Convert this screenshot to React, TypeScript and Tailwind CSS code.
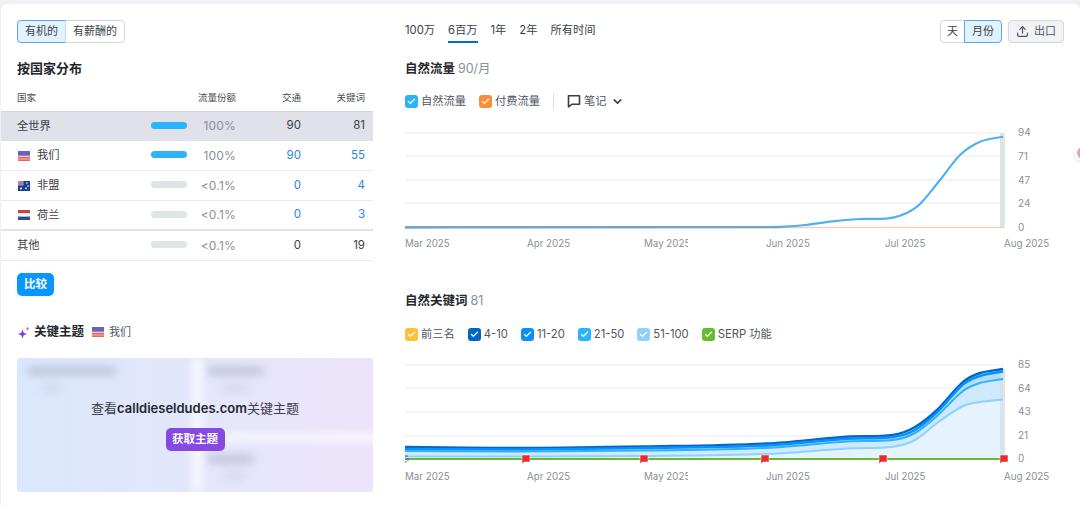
import { Check, ChevronDown, Upload } from 'lucide-react';

const rows = [
  { name: '全世界', flag: '', share: '100%', full: true, traffic: '90', keywords: '81', link: false },
  { name: '我们', flag: 'us', share: '100%', full: true, traffic: '90', keywords: '55', link: true },
  { name: '非盟', flag: 'au', share: '<0.1%', full: false, traffic: '0', keywords: '4', link: true },
  { name: '荷兰', flag: 'nl', share: '<0.1%', full: false, traffic: '0', keywords: '3', link: true },
  { name: '其他', flag: '', share: '<0.1%', full: false, traffic: '0', keywords: '19', link: false },
];

const keywordLegend = [
  { label: '前三名', color: 'bg-[#ffc039]' },
  { label: '4-10', color: 'bg-[#0066c4]' },
  { label: '11-20', color: 'bg-[#0a8fff]' },
  { label: '21-50', color: 'bg-[#2bb3ff]' },
  { label: '51-100', color: 'bg-[#8fd0ff]' },
  { label: 'SERP 功能', color: 'bg-[#66bb2f]' },
];

const xs = [405, 527, 644, 766, 847, 893, 915, 937, 963, 980, 1003];
const top10 = [447, 448, 446.5, 443.5, 436.7, 435, 427, 410, 382, 373, 369];
const top20 = [449, 449.5, 448, 445.5, 438.7, 437, 430, 412.5, 384.5, 376, 371.5];
const top50 = [451, 451.5, 450.5, 448, 441.5, 440, 433, 416, 391, 383, 379];
const top100 = [456.5, 456.5, 456, 454, 448.5, 446.7, 440, 423, 406, 402, 399.5];

// smooth line through the data points, slopes from the neighbours
function smooth(px: number[], py: number[]) {
  const n = px.length;
  const slope = (i: number) => {
    const a = Math.max(i - 1, 0);
    const b = Math.min(i + 1, n - 1);
    return (py[b] - py[a]) / (px[b] - px[a]);
  };
  let d = `M${px[0]} ${py[0]}`;
  for (let i = 0; i < n - 1; i++) {
    const dx = (px[i + 1] - px[i]) / 3;
    d += ` C${px[i] + dx} ${py[i] + slope(i) * dx} ${px[i + 1] - dx} ${py[i + 1] - slope(i + 1) * dx} ${px[i + 1]} ${py[i + 1]}`;
  }
  return d;
}

function Flag({ code }: { code: string }) {
  if (code === 'us') {
    return (
      <svg width="12" height="10" viewBox="0 0 12 10" className="shrink-0">
        <rect width="12" height="10" fill="#f3a6a6" />
        <rect y="1.5" width="12" height="1.2" fill="#e36a6a" />
        <rect y="4.4" width="12" height="1.2" fill="#f7d0d0" />
        <rect y="6" width="12" height="1.4" fill="#e36a6a" />
        <rect y="8.6" width="12" height="1.4" fill="#e36a6a" />
        <rect width="12" height="4.6" fill="#5561c0" opacity="0.9" />
      </svg>
    );
  }
  if (code === 'au') {
    return (
      <svg width="12" height="10" viewBox="0 0 12 10" className="shrink-0">
        <rect width="12" height="10" fill="#1c3f94" />
        <rect width="5.5" height="4.6" fill="#8d9acb" />
        <path d="M0 2.3h5.5M2.7 0v4.6" stroke="#e2646c" strokeWidth="1" />
        <circle cx="8.8" cy="2" r="0.8" fill="#fff" />
        <circle cx="10" cy="5" r="0.8" fill="#fff" />
        <circle cx="8" cy="7.4" r="0.8" fill="#fff" />
        <circle cx="3" cy="7.4" r="1" fill="#fff" />
      </svg>
    );
  }
  return (
    <svg width="12" height="10" viewBox="0 0 12 10" className="shrink-0">
      <rect width="12" height="3.4" fill="#c8414b" />
      <rect y="3.4" width="12" height="3.2" fill="#f4f4f6" />
      <rect y="6.6" width="12" height="3.4" fill="#2d4a8c" />
    </svg>
  );
}

function CheckBox({ color, label }: { color: string; label: string }) {
  return (
    <div className="flex items-center gap-[3px]">
      <span className={`flex h-[13px] w-[13px] items-center justify-center rounded-[3px] ${color}`}>
        <Check size={9} strokeWidth={3.5} className="text-white" />
      </span>
      <span className="text-[11.25px] text-[#51555f]">{label}</span>
    </div>
  );
}

function RedFlag({ x }: { x: number }) {
  return <path d={`M${x - 4} 455h8v7h-6l-2 2z`} fill="#ee2a2f" stroke="#fff" strokeWidth="0.5" />;
}

function XAxis() {
  return (
    <div className="flex whitespace-nowrap text-[9.75px] leading-[14px] text-[#8b8f98]">
      <span className="w-[122px] shrink-0">Mar 2025</span>
      <span className="w-[117px] shrink-0">Apr 2025</span>
      <span className="w-[122px] shrink-0">
        <span className="block w-[44px] overflow-hidden">May 2025</span>
      </span>
      <span className="w-[119px] shrink-0">Jun 2025</span>
      <span className="w-[119px] shrink-0">Jul 2025</span>
      <span className="shrink-0">Aug 2025</span>
    </div>
  );
}

function YAxis({ values, className }: { values: string[]; className: string }) {
  return (
    <div className={`ml-[13px] flex flex-col justify-between text-[10px] leading-[12px] text-[#8b8f98] ${className}`}>
      {values.map((v) => (
        <span key={v}>{v}</span>
      ))}
    </div>
  );
}

export default function App() {
  return (
    <div className="h-[506px] w-[1080px] overflow-hidden bg-[#eff1f5] pl-px pt-[4px] font-['Inter','Noto_Sans_CJK_SC',sans-serif] text-[#2f3138]">
      <div className="relative flex h-[510px] rounded-tl-md rounded-tr-md bg-white">
        {/* Left column */}
        <div className="w-[372px] shrink-0 pt-[16px]">
          <div className="ml-[16px] flex h-[23px] w-fit text-[11px]">
            <button className="rounded-l-[4px] border border-[#5aa5e6] bg-[#e3f2ff] px-[7px] text-[#3c4048]">有机的</button>
            <button className="-ml-px rounded-r-[4px] border border-[#d3d6de] px-[7px] text-[#3c4048]">有薪酬的</button>
          </div>
          <h2 className="ml-[16px] mt-[15px] text-[13px] font-bold leading-[20px] text-[#24262c]">按国家分布</h2>

          <div className="mt-[10px] grid h-[23px] grid-cols-[134px_36px_49px_65px_64px] pl-[16px] text-[9.5px] leading-[20px] text-[#4a4d55]">
            <span>国家</span>
            <span className="col-span-2 text-right">流量份额</span>
            <span className="text-right">交通</span>
            <span className="text-right">关键词</span>
          </div>

          {rows.map((r, i) => (
            <div
              key={r.name}
              className={`grid h-[30px] grid-cols-[134px_36px_49px_65px_64px] items-center border-b pl-[16px] text-[11.25px] ${
                i === 0
                  ? 'border-t border-t-[#d2d4da] border-b-transparent bg-[#e0e1e9]'
                  : i === 3
                    ? 'border-b-2 border-b-[#dfe3e5]'
                    : 'border-b-[#e8ebee]'
              }`}
            >
              <span className="flex items-center gap-[7px] text-[#3c3f47]">
                {r.flag && <span className="ml-px"><Flag code={r.flag} /></span>}
                {r.name}
              </span>
              <span className={`mb-[2px] h-[7px] rounded-full ${r.full ? 'bg-[#2bb3ff]' : 'bg-[#dfe4e7]'}`} />
              <span className="text-right text-[12px] tracking-[0.2px] text-[#8b8f98]">{r.share}</span>
              <span className={`text-right text-[11.5px] ${r.link ? 'text-[#2f86d6]' : 'text-[#3c3f47]'}`}>{r.traffic}</span>
              <span className={`text-right text-[11.5px] ${r.link ? 'text-[#2f86d6]' : 'text-[#3c3f47]'}`}>{r.keywords}</span>
            </div>
          ))}

          <button className="ml-[16px] mt-[12px] h-[23px] w-[37px] rounded-[5px] bg-[#0a96ff] text-[11.5px] font-semibold text-white">比较</button>

          <div className="ml-[17px] mt-[26px] flex h-[20px] items-center">
            <svg width="12" height="13" viewBox="0 0 12 13" className="shrink-0">
              <path d="M4.5 3.5l1.2 3.3 3.3 1.2-3.3 1.2-1.2 3.3-1.2-3.3L0 8l3.3-1.2z" fill="#7a3fd6" />
              <path d="M9.5 0.5l.6 1.7 1.7.6-1.7.6-.6 1.7-.6-1.7-1.7-.6 1.7-.6z" fill="#a678ea" />
            </svg>
            <span className="ml-[4px] text-[12.5px] font-bold text-[#24262c]">关键主题</span>
            <span className="ml-[8px]"><Flag code="us" /></span>
            <span className="ml-[5px] text-[11px] text-[#51555f]">我们</span>
          </div>

          <div className="relative ml-[16px] mt-[16px] flex h-[134px] w-[356px] flex-col items-center overflow-hidden rounded-[3px] bg-gradient-to-r from-[#dbe8fd] via-[#e3e6fb] to-[#ede4fc]">
            {/* blurred placeholders behind the upsell */}
            <div className="absolute left-[174px] top-0 h-full w-[12px] bg-white/70 blur-[4px]" />
            <div className="absolute left-[207px] top-[75px] h-[9px] w-[160px] bg-white/70 blur-[4px]" />
            <div className="absolute left-[9px] top-[9px] h-[8px] w-[90px] rounded bg-[#9aa0b8]/50 blur-[4px]" />
            <div className="absolute left-[24px] top-[28px] h-[5px] w-[20px] rounded bg-[#9aa0b8]/30 blur-[4px]" />
            <div className="absolute left-[191px] top-[9px] h-[8px] w-[56px] rounded bg-[#9aa0b8]/50 blur-[4px]" />
            <div className="absolute left-[205px] top-[28px] h-[5px] w-[28px] rounded bg-[#9aa0b8]/30 blur-[4px]" />
            <div className="absolute left-[191px] top-[97px] h-[8px] w-[46px] rounded bg-[#9aa0b8]/50 blur-[4px]" />
            <div className="absolute left-[207px] top-[115px] h-[5px] w-[22px] rounded bg-[#9aa0b8]/30 blur-[4px]" />
            <p className="relative mt-[41px] text-[13px] leading-[18px] text-[#3c3f47]">
              查看<span className="font-semibold text-[#24262c]">calldieseldudes.com</span>关键主题
            </p>
            <button className="relative mt-[11px] h-[23px] w-[59px] rounded-[5px] bg-[#8649e1] text-[11.5px] font-semibold text-white">获取主题</button>
          </div>
        </div>

        {/* Right column */}
        <div className="flex-1 pl-[32px] pr-[16px] pt-[16px]">
          <div className="flex h-[23px] items-center justify-between">
            <div className="flex gap-[13px] text-[11.25px] text-[#3c3f47]">
              <span className="h-[23px] leading-[21px]">100万</span>
              <span className="h-[23px] border-b-2 border-b-[#006dca] leading-[21px]">6百万</span>
              <span className="h-[23px] leading-[21px]">1年</span>
              <span className="h-[23px] leading-[21px]">2年</span>
              <span className="h-[23px] leading-[21px]">所有时间</span>
            </div>
            <div className="flex h-[23px] text-[11px]">
              <button className="rounded-l-[4px] border border-[#d3d6de] px-[6px] text-[#3c4048]">天</button>
              <button className="-ml-px rounded-r-[4px] border border-[#5aa5e6] bg-[#e3f2ff] px-[7px] text-[#3c4048]">月份</button>
              <button className="ml-[6px] flex items-center gap-[5px] rounded-[4px] border border-[#d3d6de] bg-[#f1f2f6] px-[7px] text-[#51555f]">
                <Upload size={13} strokeWidth={2.2} />
                出口
              </button>
            </div>
          </div>

          <h2 className="mt-[16px] text-[12.5px] font-bold leading-[20px] text-[#24262c]">
            自然流量 <span className="font-normal text-[#8b8f98]">90/月</span>
          </h2>

          <div className="mt-[12px] flex h-[20px] items-center">
            <CheckBox color="bg-[#2bb3ff]" label="自然流量" />
            <span className="ml-[13px]"><CheckBox color="bg-[#ff8c39]" label="付费流量" /></span>
            <span className="ml-[13px] h-[17px] w-px bg-[#dfe1e6]" />
            <svg width="14" height="14" viewBox="0 0 14 14" className="ml-[13px] shrink-0">
              <path d="M1.5 1.8h11v8.4H5l-3.5 2.6z" fill="none" stroke="#3c3f47" strokeWidth="1.6" strokeLinejoin="round" />
            </svg>
            <span className="ml-[3px] text-[11.25px] text-[#51555f]">笔记</span>
            <ChevronDown size={13} strokeWidth={3} className="ml-[4px] text-[#3c3f47]" />
          </div>

          <div className="mt-[21px] flex h-[96px]">
            <svg width="600" height="96" viewBox="405 132 600 96" className="shrink-0 overflow-visible">
              {[133, 156, 180, 203].map((y) => (
                <line key={y} x1="405" x2="1003" y1={y} y2={y} stroke="#e8e9ef" strokeWidth="1" />
              ))}
              <rect x="1000" y="133" width="5" height="94" fill="#dfe4e7" />
              <line x1="405" x2="1004" y1="227.5" y2="227.5" stroke="#f8cdb0" strokeWidth="1.6" />
              <path
                d={smooth(
                  [405, 766, 785, 805, 830, 860, 893, 917, 940, 960, 980, 1003],
                  [227.3, 227, 226.6, 225, 221.6, 219, 217.7, 206.7, 180, 155, 141.7, 136.7],
                )}
                fill="none"
                stroke="#4fb0f6"
                strokeWidth="2.2"
              />
              <line x1="405" x2="780" y1="227.3" y2="227.3" stroke="#7da0bc" strokeWidth="2" />
            </svg>
            <YAxis values={['94', '71', '47', '24', '0']} className="-mt-[6px] h-[107px]" />
          </div>
          <div className="mt-[9px]"><XAxis /></div>

          <h2 className="mt-[40px] text-[12.5px] font-bold leading-[20px] text-[#24262c]">
            自然关键词 <span className="font-normal text-[#8b8f98]">81</span>
          </h2>

          <div className="mt-[13px] flex h-[20px] items-center gap-[13px]">
            {keywordLegend.map((l) => (
              <CheckBox key={l.label} color={l.color} label={l.label} />
            ))}
          </div>

          <div className="mt-[21px] flex h-[94px]">
            <svg width="600" height="94" viewBox="405 365 600 94" className="shrink-0 overflow-visible">
              {[365, 388, 412, 436].map((y) => (
                <line key={y} x1="405" x2="1003" y1={y} y2={y} stroke="#eaebf1" strokeWidth="1" />
              ))}
              <path d={`${smooth(xs, top10)} L1003 459 L405 459 Z`} fill="#b6dcfb" />
              <path d={`${smooth(xs, top50)} L1003 459 L405 459 Z`} fill="#cfeaff" />
              <path d={`${smooth(xs, top100)} L1003 459 L405 459 Z`} fill="#e5f3ff" />
              <rect x="1000" y="369" width="5" height="90" fill="#d5e0e8" opacity="0.8" />
              <path d={smooth(xs, top10)} fill="none" stroke="#0066c4" strokeWidth="2.4" />
              <path d={smooth(xs, top20)} fill="none" stroke="#0a8fff" strokeWidth="2.4" />
              <path d={smooth(xs, top50)} fill="none" stroke="#2bb3ff" strokeWidth="2" />
              <path d={smooth(xs, top100)} fill="none" stroke="#8fd0ff" strokeWidth="2" />
              <line x1="405" x2="1004" y1="459" y2="459" stroke="#66bb2f" strokeWidth="1.8" />
              <path d="M408 456.5a2.6 2.6 0 0 0-3-.3" fill="none" stroke="#e8453c" strokeWidth="1.2" />
              <path d="M405.5 458.8h3a2.6 2.6 0 0 1-1 2" fill="none" stroke="#4285f4" strokeWidth="1.2" />
              <path d="M407 461.5a2.6 2.6 0 0 1-2 .3" fill="none" stroke="#34a853" strokeWidth="1.2" />
              {[526, 644, 765, 883, 1004].map((x) => (
                <RedFlag key={x} x={x} />
              ))}
            </svg>
            <YAxis values={['85', '64', '43', '21', '0']} className="-mt-[7px] h-[106px]" />
          </div>
          <div className="mt-[11px]"><XAxis /></div>
        </div>

        {/* chat bubble peeking in from the right edge */}
        <div className="absolute left-[1073px] top-[140px] h-[18px] w-[18px] rounded-full border-[3px] border-white bg-[#f39bb0] shadow-sm" />
      </div>
    </div>
  );
}
